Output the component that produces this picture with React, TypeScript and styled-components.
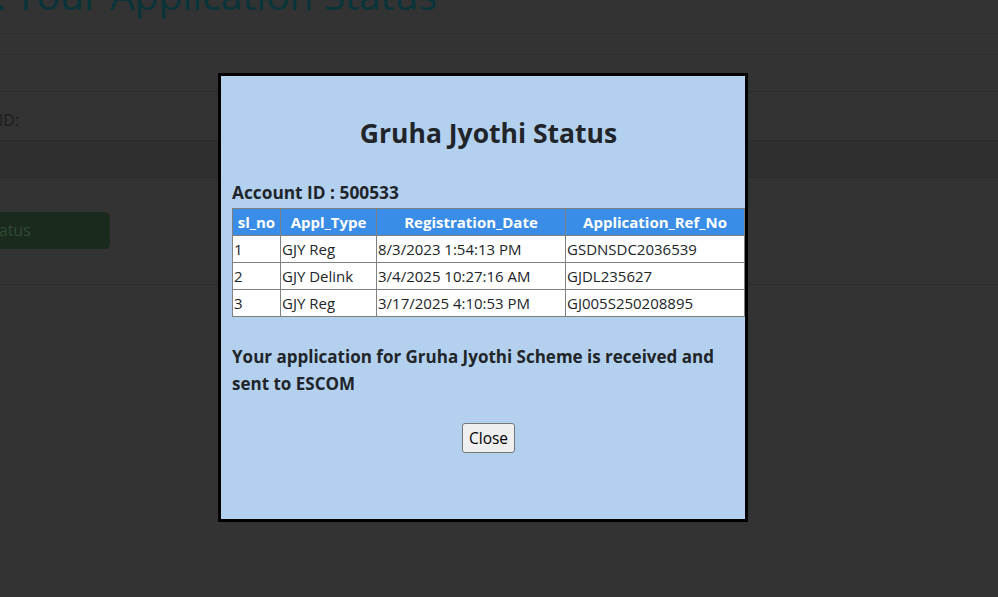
import React from "react";
import styled, { createGlobalStyle } from "styled-components";

const Global = createGlobalStyle`
  html, body { margin: 0; padding: 0; background: #333333; }
  body { font-family: "Open Sans", "Noto Sans", Arial, sans-serif; overflow: hidden; }
`;

const Viewport = styled.div`
  width: 998px;
  height: 597px;
  overflow: hidden;
  position: relative;
  background: #333333;
`;

const Page = styled.div`
  margin-left: -200px;
  margin-top: -30px;
  width: 1400px;
`;

const Title = styled.h1`
  margin: 0;
  height: 64px;
  box-sizing: border-box;
  font-size: 39px;
  font-weight: 400;
  color: #08343a;
  line-height: 50px;
  border-bottom: 1px solid #2b2b2b;
  display: flex;
`;

const TitleText = styled.span`
  width: 637px;
  text-align: right;
  white-space: nowrap;
  display: block;
`;

const Band = styled.div<{ $h: number; $bg?: string }>`
  height: ${(p) => p.$h}px;
  box-sizing: border-box;
  border-bottom: 1px solid #2b2b2b;
  background: ${(p) => p.$bg || "transparent"};
  display: flex;
  align-items: center;
`;

const Label = styled.span`
  width: 219px;
  text-align: right;
  white-space: nowrap;
  font-size: 16px;
  color: #1c1c1c;
  margin-top: 8px;
`;

const GhostButton = styled.div`
  width: 254px;
  height: 37px;
  margin-left: 56px;
  margin-top: -2px;
  border-radius: 5px;
  background: #1a2a1c;
  color: #2e4a34;
  font-size: 16px;
  display: flex;
  align-items: center;
  justify-content: center;
  white-space: nowrap;
`;

const Modal = styled.div`
  position: absolute;
  left: 218px;
  top: 73px;
  width: 530px;
  height: 449px;
  box-sizing: border-box;
  border: 3px solid #000;
  background: #b3d1ef;
  padding: 0 0 0 11px;
  color: #212529;
  display: flex;
  flex-direction: column;
`;

const ModalTitle = styled.h2`
  margin: 40px 0 0 0;
  text-align: center;
  font-size: 26.5px;
  line-height: 34px;
  font-weight: 700;
  color: #212529;
`;

const AccountLine = styled.div`
  margin-top: 31px;
  font-size: 17.3px;
  line-height: 23px;
  font-weight: 700;
`;

const Table = styled.table`
  border-collapse: collapse;
  margin-top: 4px;
  width: 512px;
  table-layout: fixed;
  font-size: 15px;
`;

const Th = styled.th<{ $w: number }>`
  width: ${(p) => p.$w}px;
  background: #3a8de6;
  color: #fff;
  font-weight: 700;
  text-align: center;
  border: 1px solid #808080;
  height: 27px;
  padding: 0 2px;
  line-height: 20px;
  box-sizing: border-box;
  white-space: nowrap;
`;

const Td = styled.td`
  background: #fff;
  border: 1px solid #808080;
  height: 27px;
  line-height: 20px;
  padding: 0 1px;
  box-sizing: border-box;
  color: #212529;
  white-space: nowrap;
`;

const Message = styled.p`
  margin: 26px 0 0 0;
  font-size: 17px;
  line-height: 27px;
  font-weight: 700;
  padding-right: 20px;
`;

const ButtonRow = styled.div`
  display: flex;
  justify-content: center;
  margin-top: 26px;
`;

const CloseButton = styled.button`
  font-family: "Open Sans", "Noto Sans", Arial, sans-serif;
  font-size: 15.5px;
  background: #efefef;
  border: 1px solid #767676;
  border-radius: 3px;
  height: 30px;
  padding: 0 6px;
  color: #000;
`;

const rows = [
  ["1", "GJY Reg", "8/3/2023 1:54:13 PM", "GSDNSDC2036539"],
  ["2", "GJY Delink", "3/4/2025 10:27:16 AM", "GJDL235627"],
  ["3", "GJY Reg", "3/17/2025 4:10:53 PM", "GJ005S250208895"],
];

export default function App() {
  return (
    <Viewport>
      <Global />
      <Page>
        <Title>
          <TitleText>Check Your Application Status</TitleText>
        </Title>
        <Band $h={21} />
        <Band $h={37} />
        <Band $h={49}>
          <Label>Account ID:</Label>
        </Band>
        <Band $h={37} $bg="#2f2f2f" />
        <Band $h={107}>
          <GhostButton>Check Status</GhostButton>
        </Band>
      </Page>
      <Modal>
        <ModalTitle>Gruha Jyothi Status</ModalTitle>
        <AccountLine>Account ID : 500533</AccountLine>
        <Table>
          <thead>
            <tr>
              <Th $w={48}>sl_no</Th>
              <Th $w={96}>Appl_Type</Th>
              <Th $w={189}>Registration_Date</Th>
              <Th $w={179}>Application_Ref_No</Th>
            </tr>
          </thead>
          <tbody>
            {rows.map((r) => (
              <tr key={r[0]}>
                {r.map((c, i) => (
                  <Td key={i}>{c}</Td>
                ))}
              </tr>
            ))}
          </tbody>
        </Table>
        <Message>
          Your application for Gruha Jyothi Scheme is received and sent to ESCOM
        </Message>
        <ButtonRow>
          <CloseButton>Close</CloseButton>
        </ButtonRow>
      </Modal>
    </Viewport>
  );
}
